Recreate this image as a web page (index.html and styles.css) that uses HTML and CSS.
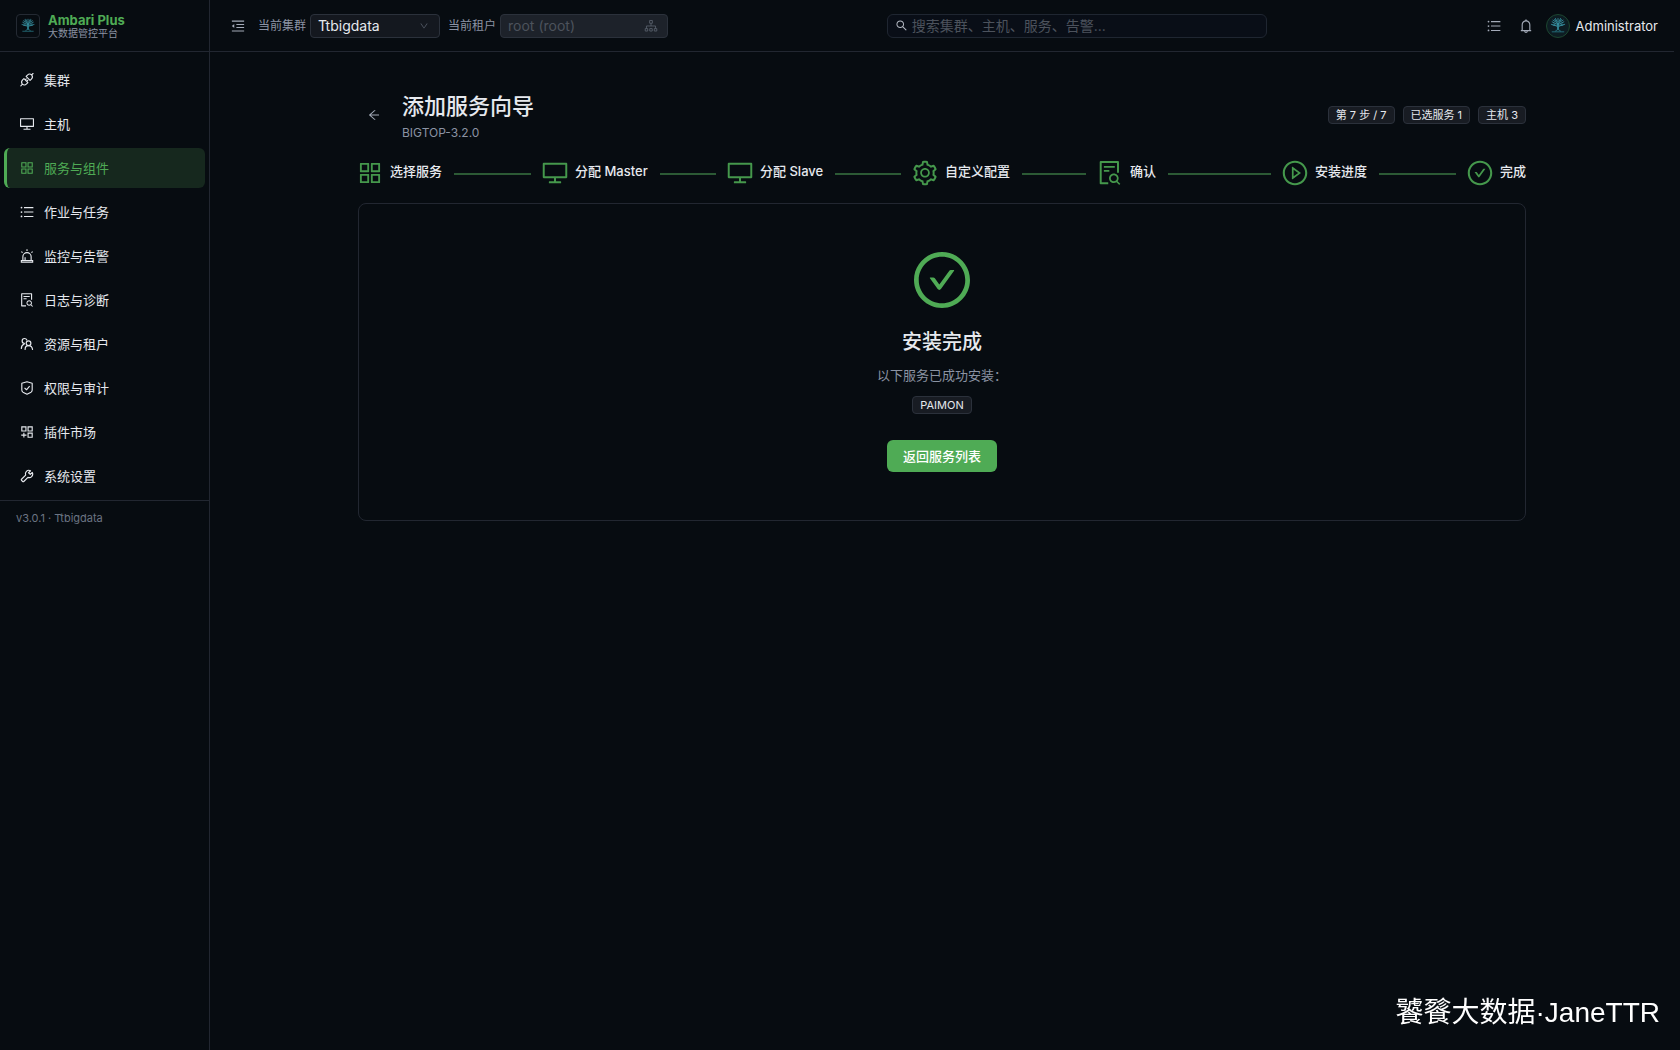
FILE: index.html
```html
<!DOCTYPE html>
<html lang="zh-CN">
<head>
<meta charset="utf-8">
<title>Ambari Plus</title>
<link rel="stylesheet" href="styles.css">
</head>
<body>
<svg class="sprite" aria-hidden="true">
  <symbol id="i-grid" viewBox="0 0 1024 1024"><path d="M464 144H160c-8.800 0-16 7.200-16 16v304c0 8.800 7.200 16 16 16h304c8.800 0 16-7.200 16-16V160c0-8.800-7.200-16-16-16zm-52 268H212V212h200v200zm452-268H560c-8.800 0-16 7.200-16 16v304c0 8.800 7.200 16 16 16h304c8.800 0 16-7.200 16-16V160c0-8.800-7.200-16-16-16zm-52 268H612V212h200v200zM464 544H160c-8.800 0-16 7.200-16 16v304c0 8.800 7.200 16 16 16h304c8.800 0 16-7.200 16-16V560c0-8.800-7.200-16-16-16zm-52 268H212V612h200v200zm452-268H560c-8.800 0-16 7.200-16 16v304c0 8.800 7.200 16 16 16h304c8.800 0 16-7.200 16-16V560c0-8.800-7.200-16-16-16zm-52 268H612V612h200v200z"/></symbol>
  <symbol id="i-desktop" viewBox="0 0 1024 1024"><path d="M928 140H96c-17.700 0-32 14.300-32 32v496c0 17.700 14.300 32 32 32h380v112H304c-8.800 0-16 7.200-16 16v48c0 4.400 3.600 8 8 8h432c4.400 0 8-3.600 8-8v-48c0-8.800-7.200-16-16-16H548V700h380c17.700 0 32-14.300 32-32V172c0-17.700-14.300-32-32-32zm-40 488H136V212h752v416z"/></symbol>
  <symbol id="i-list" viewBox="0 0 1024 1024"><path d="M320 192h600v72H320zM320 476h600v72H320zM320 760h600v72H320z"/><circle cx="160" cy="228" r="56"/><circle cx="160" cy="512" r="56"/><circle cx="160" cy="796" r="56"/></symbol>
  <symbol id="i-file" viewBox="0 0 1024 1024"><path d="M688 312v-48c0-4.400-3.600-8-8-8H296c-4.400 0-8 3.600-8 8v48c0 4.400 3.600 8 8 8h384c4.400 0 8-3.600 8-8zm-392 88c-4.400 0-8 3.600-8 8v48c0 4.400 3.600 8 8 8h184c4.400 0 8-3.600 8-8v-48c0-4.400-3.600-8-8-8H296zm144 452H208V148h560v344c0 4.400 3.600 8 8 8h56c4.400 0 8-3.600 8-8V108c0-17.700-14.300-32-32-32H168c-17.700 0-32 14.300-32 32v784c0 17.700 14.300 32 32 32h272c4.400 0 8-3.600 8-8v-56c0-4.400-3.600-8-8-8zm445.700 51.500l-93.300-93.300C814.700 780.700 828 743.900 828 704c0-97.200-78.800-176-176-176s-176 78.800-176 176 78.800 176 176 176c35.800 0 69-10.700 96.800-29l94.700 94.700c1.600 1.600 3.600 2.300 5.600 2.300s4.100-.8 5.600-2.300l31-31a7.900 7.900 0 000-11.200zM652 816c-61.900 0-112-50.100-112-112s50.100-112 112-112 112 50.100 112 112-50.100 112-112 112z"/></symbol>
  <symbol id="i-gear" viewBox="0 0 1024 1024"><path d="M924.800 625.700l-65.500-56c3.100-19 4.700-38.400 4.700-57.800s-1.600-38.800-4.700-57.800l65.500-56a32.030 32.030 0 009.300-35.200l-.9-2.600a443.740 443.740 0 00-79.700-137.900l-1.800-2.100a32.120 32.120 0 00-35.100-9.500l-81.300 28.900c-30-24.600-63.500-44-99.700-57.600l-15.700-85a32.050 32.050 0 00-25.800-25.700l-2.700-.5c-52.100-9.400-106.900-9.400-159 0l-2.700.5a32.050 32.050 0 00-25.800 25.700l-15.800 85.400a351.860 351.860 0 00-99 57.400l-81.900-29.100a32 32 0 00-35.100 9.500l-1.800 2.100a446.020 446.020 0 00-79.700 137.900l-.9 2.600c-4.500 12.500-.8 26.500 9.300 35.200l66.300 56.600c-3.100 18.800-4.600 38-4.600 57.100 0 19.200 1.500 38.400 4.600 57.100L99 625.500a32.030 32.030 0 00-9.300 35.200l.9 2.600c18.100 50.400 44.900 96.900 79.700 137.900l1.800 2.100a32.120 32.120 0 0035.100 9.500l81.900-29.100c29.800 24.500 63.100 43.900 99 57.400l15.800 85.400a32.050 32.050 0 0025.800 25.700l2.700.5a449.400 449.400 0 00159 0l2.700-.5a32.050 32.050 0 0025.800-25.700l15.700-85a350 350 0 0099.700-57.600l81.300 28.900a32 32 0 0035.100-9.500l1.800-2.100c34.800-41.100 61.600-87.500 79.700-137.900l.9-2.600c4.500-12.300.8-26.300-9.300-35zM788.300 465.900c2.500 15.100 3.800 30.600 3.800 46.100s-1.300 31-3.800 46.100l-6.600 40.100 74.700 63.900a370.030 370.030 0 01-42.600 73.600L721 702.800l-31.400 25.800c-23.900 19.600-50.500 35-79.300 45.800l-38.100 14.300-17.900 97a377.500 377.500 0 01-85 0l-17.900-97.200-37.800-14.500c-28.500-10.800-55-26.200-78.700-45.700l-31.400-25.900-93.400 33.200c-17-22.900-31.200-47.600-42.600-73.600l75.500-64.500-6.500-40c-2.400-14.900-3.700-30.300-3.700-45.500 0-15.300 1.200-30.600 3.700-45.500l6.500-40-75.500-64.500c11.300-26.100 25.600-50.700 42.600-73.600l93.400 33.200 31.400-25.900c23.700-19.500 50.200-34.900 78.700-45.700l37.900-14.300 17.900-97.200c28.100-3.200 56.800-3.200 85 0l17.900 97 38.100 14.300c28.700 10.800 55.400 26.200 79.300 45.800l31.400 25.800 92.800-32.900c17 22.900 31.200 47.600 42.600 73.600L781.800 426l6.500 39.900zM512 326c-97.200 0-176 78.800-176 176s78.800 176 176 176 176-78.800 176-176-78.800-176-176-176zm79.200 255.200A111.600 111.600 0 01512 614c-29.900 0-58-11.700-79.200-32.800A111.600 111.600 0 01400 502c0-29.900 11.700-58 32.800-79.200C454 401.600 482.100 390 512 390c29.900 0 58 11.600 79.200 32.800A111.600 111.600 0 01624 502c0 29.900-11.700 58-32.800 79.200z"/></symbol>
  <symbol id="i-play" viewBox="0 0 1024 1024"><path d="M512 64C264.600 64 64 264.600 64 512s200.600 448 448 448 448-200.600 448-448S759.400 64 512 64zm0 820c-205.400 0-372-166.600-372-372s166.600-372 372-372 372 166.600 372 372-166.600 372-372 372z"/><path d="M719.400 499.100l-296.100-215A15.900 15.900 0 00398 297v430c0 13.100 14.800 20.500 25.300 12.900l296.100-215a15.900 15.900 0 000-25.800zm-257.600 134V390.900L628.500 512 461.800 633.100z"/></symbol>
  <symbol id="i-check" viewBox="0 0 1024 1024"><path d="M699 353h-46.900c-10.200 0-19.900 4.900-25.900 13.300L469 584.300l-71.200-98.800c-6-8.300-15.600-13.300-25.900-13.300H325c-6.500 0-10.300 7.400-6.500 12.700l124.600 172.800a31.800 31.800 0 0051.700 0l210.600-292c3.900-5.300.1-12.700-6.400-12.700z"/><path d="M512 64C264.600 64 64 264.600 64 512s200.600 448 448 448 448-200.600 448-448S759.400 64 512 64zm0 820c-205.400 0-372-166.600-372-372s166.600-372 372-372 372 166.600 372 372-166.600 372-372 372z"/></symbol>
  <symbol id="i-search" viewBox="0 0 1024 1024"><path d="M909.600 854.500L649.900 594.800C690.200 542.700 712 479 712 412c0-80.200-31.300-155.400-87.900-212.100-56.600-56.700-132-87.900-212.100-87.900s-155.500 31.300-212.100 87.900C143.200 256.500 112 331.800 112 412c0 80.100 31.300 155.500 87.900 212.100C256.500 680.800 331.800 712 412 712c67 0 130.600-21.800 182.700-62l259.700 259.600a8.200 8.200 0 0011.600 0l43.600-43.500a8.200 8.200 0 000-11.600zM570.400 570.400C528 612.700 471.800 636 412 636s-116-23.300-158.400-65.600C211.300 528 188 471.800 188 412s23.300-116.100 65.600-158.400C296 211.300 352.200 188 412 188s116.100 23.200 158.400 65.600S636 352.200 636 412s-23.300 116.100-65.600 158.400z"/></symbol>
  <symbol id="i-bell" viewBox="0 0 1024 1024"><path d="M816 768h-24V428c0-141.100-104.300-257.700-240-277.100V112c0-22.100-17.900-40-40-40s-40 17.900-40 40v38.900c-135.700 19.400-240 136-240 277.100v340h-24c-17.700 0-32 14.300-32 32v32c0 4.400 3.600 8 8 8h216c0 61.800 50.200 112 112 112s112-50.200 112-112h216c4.400 0 8-3.600 8-8v-32c0-17.700-14.300-32-32-32zM512 888c-26.500 0-48-21.500-48-48h96c0 26.500-21.500 48-48 48zM304 768V428c0-55.600 21.600-107.800 60.900-147.100S456.400 220 512 220c55.600 0 107.800 21.600 147.100 60.900S720 372.400 720 428v340H304z"/></symbol>
  <symbol id="i-back" viewBox="0 0 1024 1024"><path d="M872 474H286.900l350.200-304c5.600-4.900 2.200-14-5.200-14h-88.500c-3.900 0-7.600 1.400-10.500 3.900L155 487.800a31.960 31.960 0 000 48.300L535.100 866c1.500 1.300 3.300 2 5.200 2h91.500c7.400 0 10.800-9.200 5.200-14L286.900 550H872c4.400 0 8-3.600 8-8v-60c0-4.400-3.600-8-8-8z"/></symbol>
  <symbol id="i-down" viewBox="0 0 1024 1024"><path d="M884 256h-75c-5.100 0-9.900 2.500-12.900 6.600L512 654.200 227.900 262.600c-3-4.100-7.800-6.600-12.900-6.600h-75c-6.500 0-10.300 7.400-6.500 12.700l352.600 486.100c12.800 17.600 39 17.600 51.700 0l352.600-486.100c3.900-5.300.1-12.700-6.400-12.700z"/></symbol>
  <symbol id="i-fold" viewBox="0 0 1024 1024"><path d="M408 378h496v72H408zM408 574h496v72H408zM120 160h784v72H120zM120 792h784v72H120zM115 505l142-112c6-5 15-1 15 7v224c0 8-9 12-15 7L115 519a9 9 0 010-14z"/></symbol>
  <symbol id="i-tree" viewBox="0 0 1024 1024"><path fill="none" stroke="currentColor" stroke-width="68" d="M412 110h200v200H412zM90 700h180v180H90zM754 700h180v180H754zM422 700h180v180H422zM512 310v200M180 700V510h664v190"/></symbol>
  <symbol id="i-api" viewBox="0 0 1024 1024"><g fill="none" stroke="currentColor" stroke-width="72" stroke-linecap="round" stroke-linejoin="round"><path d="M455 285l85-85c75-75 190-82 268-15 67 78 60 193-15 268l-85 85zM316 424l-85 85c-75 75-82 190-15 268 78 67 193 60 268-15l85-85zM808 185l90-90M216 777l-100 110M396 504l70-70M490 598l70-70"/></g></symbol>
  <symbol id="i-alert" viewBox="0 0 1024 1024"><g fill="none" stroke="currentColor" stroke-width="72"><path d="M248 780V560c0-146 118-264 264-264s264 118 264 264v220M150 800h724v100H150zM390 780V590M512 80v110M150 230l80 70M874 230l-80 70"/></g></symbol>
  <symbol id="i-team" viewBox="0 0 1024 1024"><g fill="none" stroke="currentColor" stroke-width="76" stroke-linecap="round"><circle cx="610" cy="460" r="150"/><path d="M390 860c0-140 95-240 220-240s235 100 255 240M500 260c-25-65-85-100-145-100-90 0-155 65-155 155 0 85 60 150 145 155M150 800c0-140 70-250 190-290"/></g></symbol>
  <symbol id="i-safe" viewBox="0 0 1024 1024"><g fill="none" stroke="currentColor" stroke-width="72" stroke-linejoin="round"><path d="M512 110l332 100v425c0 58-26 110-71 144L512 905 251 779c-45-34-71-86-71-144V210z"/><path d="M355 500l125 125 200-235"/></g></symbol>
  <symbol id="i-plugin" viewBox="0 0 1024 1024"><path fill="none" stroke="currentColor" stroke-width="72" d="M180 180h264v264H180zM580 180h264v264H580zM580 580h264v264H580zM312 560v304M144 712h336"/></symbol>
  <symbol id="i-tool" viewBox="0 0 1024 1024"><path fill="none" stroke="currentColor" stroke-width="74" stroke-linejoin="round" d="M850 285L722 412 612 302 740 174C650 128 545 142 474 213c-64 64-80 156-48 240L160 719c-20 20-20 49 0 69l76 76c20 20 49 20 69 0l266-266c84 32 176 16 240-48 68-68 83-176 39-265z"/></symbol>
  <symbol id="i-logo" viewBox="0 0 24 24"><g fill="none" stroke="#3794a5" stroke-width="1" stroke-linecap="round"><path d="M8 4l3 5M12 3v7M16 4l-3 5M5 7l6 3M19 7l-6 3M6 11l5 1M18 11l-5 1M9 3l2 4M15 3l-2 4M4 10l4 1M20 10l-4 1M9 7L6 5M15 7l3-2M7 9l3 3M17 9l-3 3"/><path stroke-width="2" d="M12 9v7"/><path stroke="#287b89" d="M12 16l-3 2M12 16l3 2M5 19h14"/></g></symbol>
</svg>
<div class="app">
  <aside class="sidebar">
    <div class="brand">
      <span class="brand-mark"><svg><use href="#i-logo"/></svg></span>
      <div><div class="brand-name">Ambari Plus</div><div class="brand-sub">大数据管控平台</div></div>
    </div>
    <nav class="nav">
      <a href="#"><svg><use href="#i-api"/></svg>集群</a>
      <a href="#"><svg><use href="#i-desktop"/></svg>主机</a>
      <a href="#" class="active" aria-current="page"><svg><use href="#i-grid"/></svg>服务与组件</a>
      <a href="#"><svg><use href="#i-list"/></svg>作业与任务</a>
      <a href="#"><svg><use href="#i-alert"/></svg>监控与告警</a>
      <a href="#"><svg><use href="#i-file"/></svg>日志与诊断</a>
      <a href="#"><svg><use href="#i-team"/></svg>资源与租户</a>
      <a href="#"><svg><use href="#i-safe"/></svg>权限与审计</a>
      <a href="#"><svg><use href="#i-plugin"/></svg>插件市场</a>
      <a href="#"><svg><use href="#i-tool"/></svg>系统设置</a>
    </nav>
    <div class="version">v3.0.1 · Ttbigdata</div>
  </aside>
  <div class="page">
    <header class="topbar">
      <button class="icon-btn" aria-label="折叠菜单"><svg><use href="#i-fold"/></svg></button>
      <div class="fields">
        <div class="field">
          <label for="cluster">当前集群</label>
          <div class="select"><select id="cluster"><option>Ttbigdata</option></select><svg><use href="#i-down"/></svg></div>
        </div>
        <div class="field">
          <label for="tenant">当前租户</label>
          <div class="select tenant"><select id="tenant" disabled><option>root (root)</option></select><svg><use href="#i-tree"/></svg></div>
        </div>
      </div>
      <div class="search-area">
        <div class="search"><svg><use href="#i-search"/></svg><input type="text" aria-label="搜索" placeholder="搜索集群、主机、服务、告警..."></div>
      </div>
      <div class="actions">
        <button class="icon-btn" aria-label="任务"><svg><use href="#i-list"/></svg></button>
        <button class="icon-btn" aria-label="通知"><svg><use href="#i-bell"/></svg></button>
        <button class="user"><span class="avatar"><svg><use href="#i-logo"/></svg></span>Administrator</button>
      </div>
    </header>
    <main class="wizard">
      <div class="wizard-head">
        <button class="back" aria-label="返回"><svg><use href="#i-back"/></svg></button>
        <div class="wizard-title"><h1>添加服务向导</h1><p>BIGTOP-3.2.0</p></div>
        <div class="tags"><span class="tag">第 7 步 / 7</span><span class="tag">已选服务 1</span><span class="tag">主机 3</span></div>
      </div>
      <ol class="steps">
        <li><svg><use href="#i-grid"/></svg><span>选择服务</span></li>
        <li><svg><use href="#i-desktop"/></svg><span>分配 Master</span></li>
        <li><svg><use href="#i-desktop"/></svg><span>分配 Slave</span></li>
        <li><svg><use href="#i-gear"/></svg><span>自定义配置</span></li>
        <li><svg><use href="#i-file"/></svg><span>确认</span></li>
        <li><svg><use href="#i-play"/></svg><span>安装进度</span></li>
        <li><svg><use href="#i-check"/></svg><span>完成</span></li>
      </ol>
      <section class="card">
        <svg class="done"><use href="#i-check"/></svg>
        <h2>安装完成</h2>
        <p>以下服务已成功安装：</p>
        <span class="tag">PAIMON</span>
        <button class="primary">返回服务列表</button>
      </section>
    </main>
  </div>
</div>
<div class="watermark">饕餮大数据·JaneTTR</div>
</body>
</html>
```
FILE: styles.css
```css
:root {
  --bg: #070c11;
  --line: #222731;
  --green: #4fab55;
  --text: #e6e9ee;
  --muted: #8b93a3;
}
* { box-sizing: border-box; }
body {
  margin: 0;
  background: var(--bg);
  color: var(--text);
  font: 13px/20px Inter, "Noto Sans CJK SC", sans-serif;
}
button, input, select { font: inherit; color: inherit; }
button { padding: 0; border: 0; background: none; cursor: pointer; }
h1, h2, p, ol { margin: 0; padding: 0; }
svg { display: block; flex: none; width: 16px; height: 16px; fill: currentColor; }
.sprite { display: none; }
.app { display: flex; min-height: 100vh; }

.sidebar { flex: none; width: 210px; border-right: 1px solid var(--line); }
.brand {
  display: flex;
  align-items: center;
  gap: 8px;
  height: 52px;
  padding: 0 16px;
  border-bottom: 1px solid var(--line);
}
.brand-mark {
  display: grid;
  place-items: center;
  width: 24px;
  height: 24px;
  border: 1px solid #242a33;
  border-radius: 4px;
}
.brand-mark svg { width: 18px; height: 18px; }
.brand-name { color: var(--green); font-weight: 700; line-height: 14px; }
.brand-sub { color: var(--muted); font-size: 10px; line-height: 12px; }
.nav { display: grid; gap: 4px; padding: 8px 4px 4px; }
.nav a {
  display: flex;
  align-items: center;
  gap: 9px;
  height: 40px;
  padding-left: 12px;
  border-left: 3px solid transparent;
  border-radius: 6px;
  color: var(--text);
  text-decoration: none;
}
.nav .active { border-left-color: var(--green); background: #16281e; color: var(--green); }
.version {
  padding: 8px 16px;
  border-top: 1px solid var(--line);
  color: #6b7483;
  font-size: 11px;
  line-height: 18px;
}

.page { flex: 1; min-width: 0; padding-right: 6px; }
.topbar {
  display: flex;
  align-items: center;
  gap: 12px;
  height: 52px;
  padding: 0 16px 0 20px;
  border-bottom: 1px solid var(--line);
}
.icon-btn { color: #a3aab8; }
.fields { display: flex; gap: 8px; }
.field { display: flex; align-items: center; gap: 4px; }
.field label { color: var(--muted); font-size: 12px; }
.select { position: relative; width: 130px; }
.select select {
  display: block;
  width: 100%;
  height: 24px;
  padding: 0 28px 0 7px;
  border: 1px solid #2b313b;
  border-radius: 4px;
  background: #14181f;
  font-size: 14px;
  appearance: none;
}
.select svg {
  position: absolute;
  top: 7px;
  right: 11px;
  width: 10px;
  height: 10px;
  color: #555c68;
  pointer-events: none;
}
.tenant { width: 168px; }
.tenant select { background: #1d222a; color: #4c525c; opacity: 1; }
.tenant svg { top: 5px; right: 10px; width: 14px; height: 14px; }
.search-area { display: flex; flex: 1; justify-content: center; }
.search {
  display: flex;
  align-items: center;
  gap: 4px;
  width: 380px;
  height: 24px;
  padding: 0 7px;
  border: 1px solid #1f2631;
  border-radius: 6px;
  background: #090e17;
}
.search svg { width: 13px; height: 13px; color: #b5bac4; }
.search input { flex: 1; min-width: 0; padding: 0; border: 0; outline: 0; background: none; font-size: 14px; }
.search input::placeholder { color: #4c525c; opacity: 1; }
.actions { display: flex; align-items: center; gap: 16px; }
.user { display: flex; align-items: center; gap: 6px; margin-left: -4px; }
.avatar {
  display: grid;
  place-items: center;
  width: 24px;
  height: 24px;
  border: 1px solid #1c4630;
  border-radius: 50%;
  background: #0d1c22;
}
.avatar svg { width: 20px; height: 20px; }

.wizard { max-width: 1200px; margin: 0 auto; padding: 36px 16px; }
.wizard-head { display: flex; align-items: center; gap: 12px; }
.back { display: grid; place-items: center; width: 32px; height: 32px; color: #a3aab8; }
.back svg { width: 14px; height: 14px; }
.wizard-title { flex: 1; }
h1 { font-size: 22px; line-height: 36px; font-weight: 500; }
.wizard-title p { color: var(--muted); font-size: 12px; line-height: 18px; }
.tags { display: flex; gap: 8px; }
.tag {
  padding: 0 7px;
  border: 1px solid #2b313b;
  border-radius: 4px;
  background: #181c23;
  font-size: 11px;
  line-height: 16px;
}
.steps { display: flex; margin-top: 17px; list-style: none; }
.steps li { display: flex; flex: 1 1 0; align-items: center; height: 28px; font-weight: 500; }
.steps li:last-child { flex: none; }
.steps svg { width: 28px; height: 28px; margin: 0 6px 0 -2px; color: #45984c; }
.steps span { padding-bottom: 4px; white-space: nowrap; }
.steps li:not(:last-child)::after {
  content: "";
  flex: 1;
  height: 2px;
  margin: 2px 12px 0;
  background: #2c5a35;
}
.card {
  display: flex;
  flex-direction: column;
  align-items: center;
  margin-top: 16px;
  padding: 44px 16px 48px;
  border: 1px solid var(--line);
  border-radius: 8px;
}
.done { width: 64px; height: 64px; color: var(--green); }
.card h2 { margin-top: 14px; font-size: 20px; line-height: 32px; font-weight: 500; }
.card p { margin: 6px 0 10px; color: var(--muted); line-height: 22px; }
.primary {
  height: 32px;
  margin-top: 26px;
  padding: 0 16px;
  border-radius: 6px;
  background: var(--green);
  color: #fff;
  font-weight: 500;
}
.watermark {
  position: fixed;
  right: 20px;
  bottom: 17px;
  color: #fff;
  font: 28px/40px "Liberation Sans", "Noto Sans CJK SC", sans-serif;
}
```
